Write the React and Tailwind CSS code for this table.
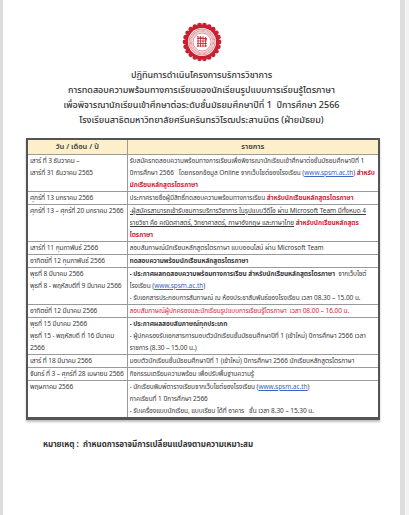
import React from "react";

const RED = "text-[#d0283a]";

function Seal() {
  const bumps = Array.from({ length: 22 }, (_, i) => {
    const a = (i / 22) * Math.PI * 2;
    return { x: 20 + Math.cos(a) * 17, y: 20 + Math.sin(a) * 17 };
  });
  return (
    <svg width="40" height="40" viewBox="0 0 40 40">
      <circle cx="20" cy="20" r="17" fill="#c8202f" />
      {bumps.map((b, i) => (
        <circle key={i} cx={b.x} cy={b.y} r="2.4" fill="#c8202f" />
      ))}
      <circle cx="20" cy="20" r="14" fill="#fff" />
      <circle cx="20" cy="20" r="13" fill="none" stroke="#c8202f" strokeWidth="0.5" />
      <circle cx="20" cy="20" r="11" fill="none" stroke="#c8202f" strokeWidth="2.4" strokeDasharray="0.7 0.5" opacity="0.55" />
      <circle cx="20" cy="20" r="9" fill="none" stroke="#c8202f" strokeWidth="0.5" />
      <g stroke="#c8202f" strokeWidth="0.8" fill="none">
        <path d="M15 16.5h10M15 19h10M15 21.5h10M15 24h10" />
        <path d="M16 15v10M18.5 14v11M21 14v11M23.5 15v10" />
        <path d="M15 14.5l10 3" />
      </g>
    </svg>
  );
}

const Link = () => (
  <span className="text-[#3d63c6] underline">www.spsm.ac.th</span>
);

const rows = [
  {
    date: ["เสาร์ ที่ 3 ธันวาคม –", "เสาร์ที่ 31 ธันวาคม 2565"],
    items: [
      <>รับสมัครทดสอบความพร้อมทางการเรียนเพื่อพิจารณานักเรียนเข้าศึกษาต่อชั้นมัธยมศึกษาปีที่ 1</>,
      <>
        ปีการศึกษา 2566&nbsp;&nbsp;&nbsp;โดยกรอกข้อมูล Online จากเว็บไซต์ของโรงเรียน (<Link />){" "}
        <span className={`${RED} font-bold`}>สำหรับ</span>
      </>,
      <span className={`${RED} font-bold`}>นักเรียนหลักสูตรไตรภาษา</span>,
    ],
  },
  {
    date: ["ศุกร์ที่ 13 มกราคม 2566"],
    items: [
      <>
        ประกาศรายชื่อผู้มีสิทธิ์ทดสอบความพร้อมทางการเรียน{" "}
        <span className={`${RED} font-bold`}>สำหรับนักเรียนหลักสูตรไตรภาษา</span>
      </>,
    ],
  },
  {
    date: ["ศุกร์ที่ 13 – ศุกร์ที่ 20 มกราคม 2566"],
    items: [
      <span className="underline">-ผู้สมัครสามารถเข้ารับชมการบริการวิชาการ ในรูปแบบวีดีโอ ผ่าน Microsoft Team มีทั้งหมด 4</span>,
      <>
        <span className="underline">รายวิชา คือ คณิตศาสตร์, วิทยาศาสตร์, ภาษาอังกฤษ และภาษาไทย</span>{" "}
        <span className={`${RED} font-bold`}>สำหรับนักเรียนหลักสูตร</span>
      </>,
      <span className={`${RED} font-bold`}>ไตรภาษา</span>,
    ],
  },
  {
    date: ["เสาร์ที่ 11  กุมภาพันธ์  2566"],
    items: [<>สอบสัมภาษณ์นักเรียนหลักสูตรไตรภาษา แบบออนไลน์ ผ่าน Microsoft Team</>],
  },
  {
    date: ["อาทิตย์ที่ 12  กุมภาพันธ์ 2566"],
    items: [<span className="font-bold">ทดสอบความพร้อมนักเรียนหลักสูตรไตรภาษา</span>],
  },
  {
    date: ["พุธที่ 8 มีนาคม 2566", "พุธที่ 8 - พฤหัสบดีที่ 9 มีนาคม 2566"],
    items: [
      <>
        <span className="font-bold">- ประกาศผลทดสอบความพร้อมทางการเรียน สำหรับนักเรียนหลักสูตรไตรภาษา</span>
        &nbsp;&nbsp;จากเว็บไซต์
      </>,
      <>
        โรงเรียน (<Link />)
      </>,
      <>- รับเอกสารประกอบการสัมภาษณ์ ณ ห้องประชาสัมพันธ์ของโรงเรียน เวลา 08.30 – 15.00 น.</>,
    ],
  },
  {
    date: ["อาทิตย์ที่ 12 มีนาคม 2566"],
    items: [
      <span className={RED}>สอบสัมภาษณ์ผู้ปกครองและนักเรียนรูปแบบการเรียนรู้ไตรภาษา&nbsp;&nbsp;เวลา 08.00 – 16.00 น.</span>,
    ],
  },
  {
    date: ["พุธที่ 15 มีนาคม 2566", "พุธที่ 15 - พฤหัสบดี ที่ 16 มีนาคม", "2566"],
    items: [
      <span className="font-bold">- ประกาศผลสอบสัมภาษณ์ทุกประเภท</span>,
      <>- ผู้ปกครองรับเอกสารการมอบตัวนักเรียนชั้นมัธยมศึกษาปีที่ 1 (เข้าใหม่) ปีการศึกษา 2566 เวลา</>,
      <>ราชการ (8.30 – 15.00 น.)</>,
    ],
  },
  {
    date: ["เสาร์ ที่ 18 มีนาคม 2566"],
    items: [<>มอบตัวนักเรียนชั้นมัธยมศึกษาปีที่ 1 (เข้าใหม่) ปีการศึกษา 2566 นักเรียนหลักสูตรไตรภาษา</>],
  },
  {
    date: ["จันทร์ ที่ 3 – ศุกร์ที่ 28 เมษายน 2566"],
    items: [<>กิจกรรมเตรียมความพร้อม เพื่อปรับพื้นฐานความรู้</>],
  },
  {
    date: ["พฤษภาคม 2566"],
    items: [
      <>
        - นักเรียนพิมพ์ตารางเรียนจากเว็บไซต์ของโรงเรียน (<Link />)
      </>,
      <>ภาคเรียนที่ 1 ปีการศึกษา 2566</>,
      <>- รับเครื่องแบบนักเรียน, แบบเรียน ได้ที่ อาคาร&nbsp;&nbsp;&nbsp;ชั้น เวลา 8.30 – 15.30 น.</>,
    ],
    last: true,
  },
];

export default function App() {
  return (
    <div
      className="w-[409px] min-h-[515px] bg-white flex text-[#3a3a3a]"
      style={{ fontFamily: '"Noto Sans Thai", Tahoma, "Noto Sans", "DejaVu Sans", sans-serif' }}
    >
      <div className="w-[3px] bg-[#dcdcdc]" />
      <div className="flex-1 flex flex-col items-center pt-[22px]">
        <Seal />
        <div className="mt-[6px] text-center text-[9px] leading-[15px] font-medium text-[#333]">
          <div>ปฏิทินการดำเนินโครงการบริการวิชาการ</div>
          <div>การทดสอบความพร้อมทางการเรียนของนักเรียนรูปแบบการเรียนรู้ไตรภาษา</div>
          <div>เพื่อพิจารณานักเรียนเข้าศึกษาต่อระดับชั้นมัธยมศึกษาปีที่ 1&nbsp;&nbsp;ปีการศึกษา 2566</div>
          <div>โรงเรียนสาธิตมหาวิทยาลัยศรีนครินทรวิโรฒประสานมิตร (ฝ่ายมัธยม)</div>
        </div>

        <table className="mt-[10px] ml-[23px] self-start w-[354px] table-fixed border-collapse leading-[12px] border-t-2 border-x-2 border-b-[3px] border-[#555] shadow-[0_2px_2px_rgba(0,0,0,0.25)]">
          <thead>
            <tr className="bg-[#fcefc9]">
              <th className="w-[100px] border-b border-r border-[#9a9a9a] text-center text-[7.5px] font-semibold py-[1px]">วัน / เดือน / ปี</th>
              <th className="border-b border-[#9a9a9a] text-center text-[7.5px] font-semibold py-[1px]">รายการ</th>
            </tr>
          </thead>
          <tbody>
            {rows.map((r, i) => (
              <tr key={i} className={r.last ? "" : "border-b border-[#9a9a9a]"}>
                <td className={`align-top border-r border-[#9a9a9a] px-[2px] whitespace-nowrap overflow-hidden text-[6.6px] tracking-[-0.1px] ${r.last ? "pb-[5px]" : ""}`}>
                  {r.date.map((d, j) => (
                    <div key={j}>{d}</div>
                  ))}
                </td>
                <td className="align-top px-[2px] whitespace-nowrap overflow-hidden text-[6.5px] tracking-[-0.05px]">
                  {r.items.map((it, j) => (
                    <div key={j} className="overflow-hidden">{it}</div>
                  ))}
                </td>
              </tr>
            ))}
          </tbody>
        </table>

        <div className="self-start ml-[40px] mt-[19px] text-[8px] font-bold text-[#333]">
          หมายเหตุ :&nbsp;&nbsp;กำหนดการอาจมีการเปลี่ยนแปลงตามความเหมาะสม
        </div>
      </div>
      <div className="w-[5px] bg-[#dedede]" />
      <div className="w-[4px] bg-[#f3f3f3]" />
    </div>
  );
}
